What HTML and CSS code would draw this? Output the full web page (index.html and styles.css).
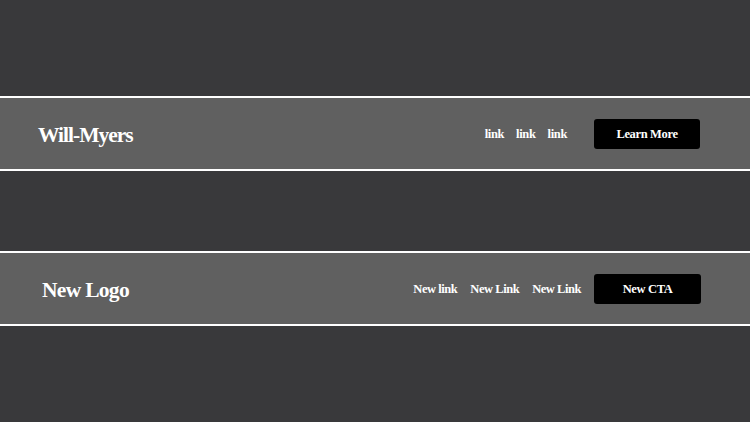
FILE: index.html
```html
<!DOCTYPE html>
<html lang="en">
<head>
<meta charset="utf-8">
<title>Nav bars</title>
<link rel="stylesheet" href="styles.css">
</head>
<body>
<main class="page">
  <header class="bar bar-one">
    <a class="logo" href="#">Will-Myers</a>
    <nav class="nav nav-one">
      <div class="links">
        <a class="link" href="#">link</a>
        <a class="link" href="#">link</a>
        <a class="link" href="#">link</a>
      </div>
      <a class="cta" href="#">Learn More</a>
    </nav>
  </header>
  <header class="bar bar-two">
    <a class="logo" href="#">New Logo</a>
    <nav class="nav nav-two">
      <div class="links">
        <a class="link" href="#">New link</a>
        <a class="link" href="#">New Link</a>
        <a class="link" href="#">New Link</a>
      </div>
      <a class="cta" href="#">New CTA</a>
    </nav>
  </header>
</main>
</body>
</html>
```
FILE: styles.css
```css
html, body {
  margin: 0;
  padding: 0;
  background: #39393b;
}
body {
  width: 750px;
  height: 422px;
  overflow: hidden;
  font-family: "Liberation Serif", "Times New Roman", serif;
  font-weight: 700;
  color: #fff;
}
a {
  color: #fff;
  text-decoration: none;
}
.page {
  display: flex;
  flex-direction: column;
  gap: 80px;
  padding-top: 96px;
}
.bar {
  display: flex;
  align-items: center;
  justify-content: space-between;
  height: 71px;
  background: #606060;
  border-top: 2px solid #fff;
  border-bottom: 2px solid #fff;
  padding: 0 50px 0 38px;
}
.bar-two {
  padding: 0 49px 0 42px;
}
.logo {
  font-size: 21.5px;
  letter-spacing: -0.7px;
  margin-top: 4px;
}
.bar-one .logo {
  letter-spacing: -1px;
}
.nav {
  display: flex;
  align-items: center;
}
.links {
  display: flex;
  align-items: center;
  margin-top: 2px;
}
.nav-one .links {
  gap: 12px;
  margin-right: 27px;
}
.nav-two .links {
  gap: 13px;
  margin-right: 13px;
}
.link {
  font-size: 12.5px;
  letter-spacing: -0.35px;
}
.nav-two .link {
  letter-spacing: -0.45px;
}
.cta {
  display: flex;
  align-items: center;
  justify-content: center;
  width: 106px;
  height: 30px;
  background: #000;
  border-radius: 3px;
  font-size: 12.5px;
  letter-spacing: -0.35px;
  padding-top: 1px;
  box-sizing: border-box;
}
.nav-two .cta {
  width: 107px;
}
```
